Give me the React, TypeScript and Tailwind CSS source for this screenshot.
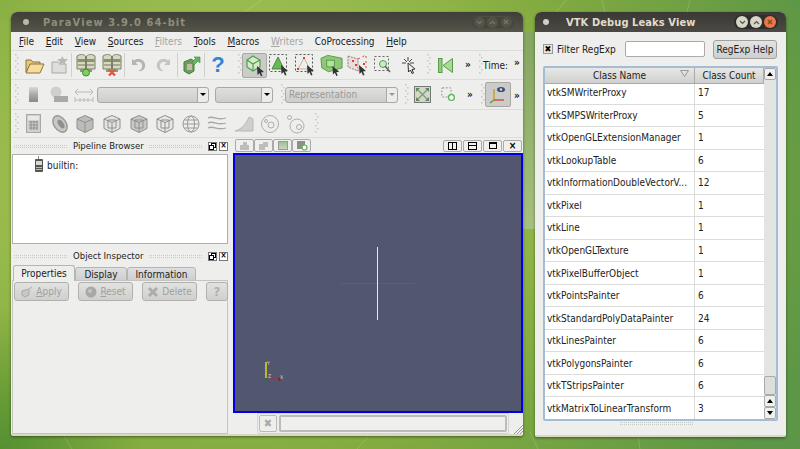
import React from "react";

const font = "font-['DejaVu_Sans_Condensed','DejaVu_Sans',sans-serif]";

const Grip = ({ h = 22 }: { h?: number }) => (
  <svg width="4" height={h} className="shrink-0">
    {Array.from({ length: Math.floor(h / 3) }).map((_, i) => (
      <rect key={i} x={i % 2 ? 2 : 0} y={i * 3} width="1.5" height="1.5" fill="#c8c8c4" />
    ))}
  </svg>
);

const Sep = () => <div className="w-px h-[24px] bg-[#cfcfcb] shrink-0" />;

const Gap = ({ w }: { w: number }) => <div className="shrink-0" style={{ width: w }} />;

const Slot = ({ w = 26, children }: { w?: number; children?: React.ReactNode }) => (
  <div className="flex items-center justify-center shrink-0" style={{ width: w }}>
    {children}
  </div>
);

const More = () => <span className="text-[10px] font-bold text-[#222] leading-none">»</span>;

const Cube = ({ stroke = "#8f8f8b", fill = "#c9c9c5", inner = false }: { stroke?: string; fill?: string; inner?: boolean }) => (
  <svg width="20" height="20" viewBox="0 0 20 20">
    <path d="M10 1.5 L18 5 V14.5 L10 18.5 L2 14.5 V5 Z" fill={fill} stroke={stroke} />
    <path d="M2 5 L10 8.5 L18 5 M10 8.5 V18.5" fill="none" stroke={stroke} />
    {inner && <path d="M6 6 L14 6 L14 14 L6 14 Z" fill="none" stroke={stroke} />}
  </svg>
);

const Cursor = () => <path d="M13 12 L20 18 L17 18.5 L18.5 22 L17 22.5 L15.5 19 L13.5 21 Z" fill="#333" />;

const Server = ({ badge }: { badge: "green" | "red" }) => (
  <svg width="20" height="24" viewBox="0 0 20 24">
    <path d="M1 3 C4 1 7 1 9.5 3 V16 H1 Z" fill="#d9d6c4" stroke="#77806a" />
    <path d="M10.5 3 C13 1 16 1 19 3 V16 H10.5 Z" fill="#d9d6c4" stroke="#77806a" />
    <rect x="1.5" y="6" width="7.5" height="3" fill="#7f9a62" />
    <rect x="11" y="6" width="7.5" height="3" fill="#7f9a62" />
    <rect x="1.5" y="11" width="7.5" height="2" fill="#a8a890" />
    <rect x="11" y="11" width="7.5" height="2" fill="#a8a890" />
    <rect x="4" y="16" width="12" height="3" fill="#8c9a78" />
    {badge === "green" ? (
      <circle cx="10" cy="19.5" r="3.5" fill="#7bd35a" stroke="#3d8c2a" />
    ) : (
      <path d="M7 16.5 L13 22.5 M13 16.5 L7 22.5" stroke="#e0583a" strokeWidth="2.4" />
    )}
  </svg>
);

const Toolbar1 = () => (
  <div className="h-[29px] flex items-center border-b border-[#dcdcd8] pl-[4px]">
    <Grip />
    <Slot w={29}>
      <svg width="22" height="20" viewBox="0 0 22 20">
        <path d="M3 5 H8 L10 7 H17 V10 H7 L3 17 Z" fill="#e7c878" stroke="#8a7440" />
        <path d="M7 9 H21 L17 18 H3 Z" fill="#f5dc9a" stroke="#8a7440" />
      </svg>
    </Slot>
    <Slot w={23}>
      <svg width="20" height="20" viewBox="0 0 20 20">
        <path d="M2 7 H8 L10 9 H16 V18 H2 Z" fill="#dededa" stroke="#a8a8a4" />
        <path d="M12 1 L14 4 L18 4 L15 7 L16 10 L12 8 L9 10 L10 7 L7 4 L11 4 Z" fill="#b8b8b4" />
      </svg>
    </Slot>
    <Sep />
    <Gap w={1} />
    <Slot w={26}><Server badge="green" /></Slot>
    <Slot w={25}><Server badge="red" /></Slot>
    <Sep />
    <Slot w={26}>
      <svg width="20" height="20" viewBox="0 0 20 20">
        <path d="M4 4 V10 H10 L7.5 7.5 C11 5.5 15 8 14 12 C13.5 14 12 15.5 10 16 C15 17 18 13 17 9 C16 4.5 10 2.5 6 5.5 Z" fill="#b4b4b0" />
      </svg>
    </Slot>
    <Slot w={25}>
      <svg width="20" height="20" viewBox="0 0 20 20" className="-scale-x-100">
        <path d="M4 4 V10 H10 L7.5 7.5 C11 5.5 15 8 14 12 C13.5 14 12 15.5 10 16 C15 17 18 13 17 9 C16 4.5 10 2.5 6 5.5 Z" fill="#c4c4c0" />
      </svg>
    </Slot>
    <Gap w={1} />
    <Sep />
    <Slot w={25}>
      <svg width="20" height="20" viewBox="0 0 20 20">
        <path d="M3 7 L10 4 L13 6 V16 L8 19 L3 16 Z" fill="#6d9c5c" stroke="#4a7a3e" />
        <rect x="6" y="9" width="5" height="6" fill="#c8b8a8" />
        <path d="M11 7 L15 3 L13 2 H19 V8 L17 6 L13 10 Z" fill="#5fb860" stroke="#3d8c40" strokeWidth="0.6" />
      </svg>
    </Slot>
    <Gap w={1} />
    <Sep />
    <Slot w={26}>
      <span className="text-[22px] font-bold text-[#2f86d8] leading-none font-['Liberation_Sans',sans-serif]">?</span>
    </Slot>
    <Gap w={7} />
    <Grip />
    <div className="w-[25px] h-[25px] rounded-[2px] bg-[#cbcbc9] border border-[#a8a8a4] flex items-center justify-center shrink-0">
      <svg width="22" height="22" viewBox="0 0 22 22">
        <path d="M9 2 L16 6 V13 L9 17 L3 13 V6 Z" fill="#d8e8cc" stroke="#4aa04a" strokeWidth="1.2" />
        <path d="M3 6 L9 10 L16 6 M9 10 V17" fill="none" stroke="#4aa04a" strokeWidth="1.2" />
        <Cursor />
      </svg>
    </div>
    <Slot w={26}>
      <svg width="24" height="24" viewBox="0 0 24 24">
        <rect x="1.5" y="1.5" width="17" height="17" fill="none" stroke="#555" strokeDasharray="2 2" />
        <path d="M10 4 L16 16 H4 Z" fill="#68b85a" stroke="#4a8a40" />
        <Cursor />
      </svg>
    </Slot>
    <Slot w={26}>
      <svg width="24" height="24" viewBox="0 0 24 24">
        <rect x="1.5" y="1.5" width="17" height="17" fill="none" stroke="#555" strokeDasharray="2 2" />
        <path d="M10 5 L16 16 H4 Z" fill="none" stroke="#b8b8a8" />
        <rect x="9" y="4" width="2" height="2" fill="#e04030" />
        <rect x="3" y="15" width="2" height="2" fill="#e04030" />
        <rect x="15" y="15" width="2" height="2" fill="#e04030" />
        <Cursor />
      </svg>
    </Slot>
    <Slot w={25}>
      <svg width="25" height="24" viewBox="0 0 26 24">
        <path d="M2 5 L9 2 L24 5 V15 L10 19 L3 15 Z" fill="#8fc87a" stroke="#5a9a4a" />
        <rect x="8" y="7" width="8" height="7" fill="#b6e0a0" stroke="#5a9a4a" />
        <path d="M14 13 L21 19 L18 19.5 L19.5 23 L18 23.5 L16.5 20 L14.5 22 Z" fill="#333" />
      </svg>
    </Slot>
    <Slot w={27}>
      <svg width="24" height="24" viewBox="0 0 24 24">
        <path d="M2 3 L12 6 V18 L2 14 Z" fill="#eadcdc" stroke="#888" strokeDasharray="2 1" />
        <path d="M12 6 L20 2 V15 L12 18" fill="none" stroke="#e04030" strokeDasharray="2 3" />
        <rect x="6" y="7" width="2" height="2" fill="#e04030" />
        <rect x="9" y="11" width="2" height="2" fill="#e04030" />
        <rect x="17" y="10" width="2" height="2" fill="#e04030" />
        <Cursor />
      </svg>
    </Slot>
    <Slot w={23}>
      <svg width="20" height="20" viewBox="0 0 20 20">
        <rect x="1.5" y="1.5" width="14" height="14" fill="none" stroke="#666" strokeDasharray="2 2" />
        <circle cx="10" cy="9" r="3.5" fill="#cfe8c8" stroke="#5a9a5a" />
        <path d="M12 11 L17 17" stroke="#666" strokeWidth="1.6" />
      </svg>
    </Slot>
    <Slot w={30}>
      <svg width="20" height="20" viewBox="0 0 20 20">
        <path d="M9 2 V6 M5 4 L8 7 M13 4 L10 7 M3 8 H7 M11 8 H15" stroke="#444" />
        <path d="M9 8 L16 14 L13 14.5 L14.5 18 L13 18.5 L11.5 15 L9.5 17 Z" fill="#eee" stroke="#333" />
      </svg>
    </Slot>
    <Gap w={3} />
    <Grip />
    <Slot w={28}>
      <svg width="15" height="15" viewBox="0 0 15 15">
        <rect x="0.5" y="0.5" width="3.5" height="14" fill="#8fd07a" stroke="#5a9a4a" />
        <path d="M14.5 0.5 V14.5 L5 7.5 Z" fill="#a8dc90" stroke="#5a9a4a" />
      </svg>
    </Slot>
    <Slot w={18}><More /></Slot>
    <Gap w={2} />
    <Grip />
    <span className="text-[10px] text-[#222]">Time:</span>
    <div className="ml-[6px] -mt-[8px]"><More /></div>
  </div>
);

const Combo = ({ w, label, disabled }: { w: number; label?: string; disabled?: boolean }) => (
  <div
    className="h-[16px] rounded-[3px] border border-[#a9a9a6] bg-gradient-to-b from-[#dfdfdd] to-[#cdcdcb] flex items-center shrink-0"
    style={{ width: w }}
  >
    <span className="flex-1 pl-[3px] text-[10px] text-[#9a9a98] leading-none">{label}</span>
    <div className="w-[11px] h-full border-l border-[#a9a9a6] flex items-center justify-center bg-[#ececea] rounded-r-[3px]">
      <div className={`w-0 h-0 border-l-[3px] border-r-[3px] border-t-[3px] border-l-transparent border-r-transparent ${disabled ? "border-t-[#999]" : "border-t-black"}`} />
    </div>
  </div>
);

const Toolbar2 = () => (
  <div className="h-[30px] flex items-center border-b border-[#dcdcd8] pl-[4px]">
    <Grip />
    <Slot w={29}>
      <div className="w-[9px] h-[15px] bg-gradient-to-b from-[#dadada] via-[#aaa] to-[#8a8a8a]" />
    </Slot>
    <Slot w={22}>
      <svg width="20" height="20" viewBox="0 0 20 20">
        <circle cx="7" cy="7" r="5.5" fill="#cfcfcd" />
        <rect x="5" y="11" width="14" height="6" fill="#a9a9a7" />
      </svg>
    </Slot>
    <Slot w={27}>
      <svg width="20" height="18" viewBox="0 0 20 18">
        <path d="M1 6 H19 M4 3 L1 6 L4 9 M16 3 L19 6 L16 9" fill="none" stroke="#bbb" />
        <path d="M1 14 H19 M1 11 V16 M6 12 V16 M10 12 V16 M14 12 V16 M19 11 V16" fill="none" stroke="#bbb" />
      </svg>
    </Slot>
    <Combo w={112} />
    <Gap w={6} />
    <Combo w={58} />
    <Gap w={8} />
    <Grip />
    <Combo w={113} label="Representation" disabled />
    <Gap w={7} />
    <Grip />
    <Slot w={26}>
      <svg width="17" height="17" viewBox="0 0 17 17">
        <rect x="0.5" y="0.5" width="16" height="16" fill="#d5d5c8" stroke="#777" />
        <path d="M3 3 L14 14 M14 3 L3 14" stroke="#7aa27a" strokeWidth="1.4" />
        <path d="M2 2 H6 L2 6 Z M15 2 V6 L11 2 Z M2 15 V11 L6 15 Z M15 15 H11 L15 11 Z" fill="#5d8a5d" />
      </svg>
    </Slot>
    <Slot w={26}>
      <svg width="15" height="15" viewBox="0 0 18 18">
        <rect x="1" y="1" width="11" height="11" rx="1" fill="none" stroke="#777" strokeDasharray="2 2" />
        <circle cx="12.5" cy="12.5" r="3.5" fill="#fff" stroke="#58b858" strokeWidth="1.6" />
      </svg>
    </Slot>
    <Slot w={18}><More /></Slot>
    <Gap w={2} />
    <Grip />
    <div className="w-[26px] h-[25px] rounded-[2px] bg-[#cbcbc9] border border-[#a8a8a4] flex items-center justify-center shrink-0">
      <svg width="20" height="20" viewBox="0 0 20 20">
        <path d="M6 4 V15" fill="none" stroke="#c9a030" strokeWidth="1.5" />
        <path d="M6 15 L2 18" stroke="#5aa040" strokeWidth="1.5" />
        <path d="M6 15 H16" stroke="#d0503a" strokeWidth="1.5" />
        <ellipse cx="13" cy="4.5" rx="4" ry="2.6" fill="#3d4f7a" />
        <circle cx="13" cy="4.5" r="1.2" fill="#ddd" />
      </svg>
    </div>
    <div className="ml-[3px] -mt-[2px]"><More /></div>
  </div>
);

const Toolbar3 = () => {
  const c = "#a8a8a4";
  return (
    <div className="h-[28px] flex items-center border-b border-[#dcdcd8] pl-[4px]">
      <Grip />
      <Slot w={29}>
        <svg width="15" height="19" viewBox="0 0 15 19">
          <rect x="0.5" y="0.5" width="14" height="18" fill="#d0d0cc" stroke={c} />
          <rect x="2" y="2" width="11" height="4" fill="#e8e8e6" />
          <path d="M3 8 H12 M3 11 H12 M3 14 H12 M5 7 V16 M8 7 V16 M11 7 V16" stroke="#8f8f8b" />
        </svg>
      </Slot>
      <Slot w={23}>
        <svg width="20" height="20" viewBox="0 0 20 20">
          <ellipse cx="10" cy="10" rx="6" ry="9" transform="rotate(-35 10 10)" fill="#c8c8c4" stroke="#9a9a96" strokeWidth="1.5" />
          <ellipse cx="11" cy="10" rx="2.5" ry="5" transform="rotate(-35 11 10)" fill="#8f8f8b" />
        </svg>
      </Slot>
      <Slot w={27}><Cube fill="#bcbcb8" /></Slot>
      <Slot w={27}><Cube fill="#e4e4e2" inner /></Slot>
      <Slot w={27}><Cube fill="#c8c8c4" inner /></Slot>
      <Slot w={26}><Cube fill="#e8e8e6" inner /></Slot>
      <Slot w={26}>
        <svg width="20" height="20" viewBox="0 0 20 20" fill="none" stroke="#9a9a96">
          <circle cx="10" cy="10" r="8" />
          <ellipse cx="10" cy="10" rx="3.5" ry="8" />
          <path d="M2 10 H18 M3.5 6 H16.5 M3.5 14 H16.5" />
        </svg>
      </Slot>
      <Slot w={26}>
        <svg width="20" height="18" viewBox="0 0 20 18" fill="none" stroke="#a8a8a4" strokeWidth="1.3">
          <path d="M1 3 C6 0 10 6 19 3 M1 8 C6 5 10 11 19 8 M1 13 C6 10 10 16 19 13" />
        </svg>
      </Slot>
      <Slot w={27}>
        <svg width="20" height="18" viewBox="0 0 20 18">
          <path d="M1 16 C8 14 12 9 15 2 L19 4 V16 Z" fill="#cfcfcb" stroke="#b8b8b4" />
        </svg>
      </Slot>
      <Slot w={25}>
        <svg width="20" height="20" viewBox="0 0 20 20" fill="none" stroke="#adada9">
          <circle cx="10" cy="10" r="8.5" />
          <circle cx="11" cy="11" r="3" />
          <circle cx="6" cy="7" r="1.5" />
        </svg>
      </Slot>
      <Slot w={27}>
        <svg width="20" height="20" viewBox="0 0 20 20" fill="none" stroke="#adada9">
          <circle cx="3.5" cy="3.5" r="2" />
          <circle cx="11" cy="12" r="7" />
          <circle cx="13" cy="13" r="2.5" />
        </svg>
      </Slot>
      <Gap w={6} />
      <Grip />
    </div>
  );
};

const DockHeader = ({ title }: { title: string }) => (
  <div className="h-[12px] flex items-center gap-[6px] text-[9.5px] text-[#222] leading-none">
    <div className="flex-1 h-[3px] border-y border-dotted border-[#c8c8c4] ml-[2px]" />
    <span className="w-[70px] text-center shrink-0 whitespace-nowrap">{title}</span>
    <div className="flex-1 h-[3px] border-y border-dotted border-[#c8c8c4]" />
    <div className="flex gap-[2px] shrink-0">
      <div className="w-[9px] h-[9px] border border-[#777] bg-white relative">
        <div className="absolute left-[2px] top-0 w-[5px] h-[5px] border border-black" />
        <div className="absolute left-0 top-[2px] w-[5px] h-[5px] border border-black bg-white" />
      </div>
      <div className="w-[9px] h-[9px] border border-[#777] bg-white flex items-center justify-center text-[8px] font-bold text-black">×</div>
    </div>
  </div>
);

const InspectorBtn = ({ w, label, first, icon }: { w: number; label?: string; first?: string; icon: React.ReactNode }) => (
  <div
    className="h-[19px] rounded-[3px] border border-[#b0b0ae] bg-gradient-to-b from-[#e2e2e0] to-[#cfcfcd] flex items-center justify-center gap-[3px] text-[10px] text-[#a0a09e] shrink-0"
    style={{ width: w }}
  >
    {icon}
    {label && (
      <span>
        <span className="underline">{first}</span>
        {label}
      </span>
    )}
  </div>
);

const Tab = ({ label, w, active }: { label: string; w: number; active?: boolean }) => (
  <div
    style={{ width: w }}
    className={
      active
        ? "h-[16px] text-[10px] text-[#222] flex items-center justify-center bg-[#eeeeec] border border-b-0 border-[#b5b5b2] rounded-t-[3px] relative z-10"
        : "h-[14px] mt-[2px] text-[10px] text-[#222] flex items-center justify-center bg-gradient-to-b from-[#dedfe0] to-[#cfcfd2] border border-[#b5b5b2] rounded-t-[3px]"
    }
  >
    {label}
  </div>
);

const ViewTab = ({ children }: { children: React.ReactNode }) => (
  <div className="w-[19px] h-[13px] rounded-[2px] border border-[#aaa] bg-[#efefed] flex items-center justify-center">{children}</div>
);

const Chevron = ({ up, color }: { up?: boolean; color: string }) => (
  <svg width="7" height="5" viewBox="0 0 7 5">
    <path d={up ? "M1 4 L3.5 1.5 L6 4" : "M1 1 L3.5 3.5 L6 1"} fill="none" stroke={color} strokeWidth="1.2" />
  </svg>
);

const Cross = ({ color }: { color: string }) => (
  <svg width="6" height="6" viewBox="0 0 6 6">
    <path d="M1 1 L5 5 M5 1 L1 5" fill="none" stroke={color} strokeWidth="1.2" />
  </svg>
);

const LeftWindow = () => (
  <div className={`absolute left-[11px] top-[12px] w-[512px] h-[424px] rounded-t-[6px] rounded-b-[2px] overflow-hidden flex flex-col bg-[#eeeeec] shadow-[0_1px_3px_rgba(0,0,0,0.45)] border-b-2 border-[#d8d8c4] ${font}`}>
    <div className="h-[20px] shrink-0 bg-gradient-to-b from-[#3f3e38] to-[#55554a] flex items-center">
      <div className="w-[6px] h-[6px] rounded-full bg-[#b8b8a8] ml-[12px]" />
      <span className="ml-[14px] font-bold text-[11px] text-[#8f8e7a] tracking-[1.1px] leading-none whitespace-nowrap">ParaView 3.9.0 64-bit</span>
      <div className="ml-auto mr-[8px] w-[44px] h-[13px] rounded-full bg-[#45453c] flex items-center justify-around px-[1px] border border-[#4e4e44]">
        <div className="w-[11px] h-[11px] rounded-full bg-[#53534a] flex items-center justify-center"><Chevron color="#77776a" /></div>
        <div className="w-[11px] h-[11px] rounded-full bg-[#53534a] flex items-center justify-center"><Chevron up color="#77776a" /></div>
        <div className="w-[11px] h-[11px] rounded-full bg-[#53534a] flex items-center justify-center"><Cross color="#77776a" /></div>
      </div>
    </div>
    <div className="h-[19px] shrink-0 flex items-center pl-[8px] gap-[11.7px] text-[10px] text-[#222] border-b border-[#dcdcd8]">
      <span><u>F</u>ile</span>
      <span><u>E</u>dit</span>
      <span><u>V</u>iew</span>
      <span><u>S</u>ources</span>
      <span className="text-[#a5a5a3]"><u>F</u>ilters</span>
      <span><u>T</u>ools</span>
      <span><u>M</u>acros</span>
      <span className="text-[#a5a5a3]"><u>W</u>riters</span>
      <span>CoProcessing</span>
      <span><u>H</u>elp</span>
    </div>
    <Toolbar1 />
    <Toolbar2 />
    <Toolbar3 />
    <div className="flex-1 flex min-h-0">
      <div className="w-[218px] shrink-0 flex flex-col pl-[1px] pr-[1px]">
        <div className="mt-[2px]"><DockHeader title="Pipeline Browser" /></div>
        <div className="h-[90px] mt-[2px] bg-white border border-[#b0b0ae] flex items-start pt-[1px]">
          <svg width="8" height="16" viewBox="0 0 8 16" className="ml-[22px]">
            <rect x="3" y="0" width="1" height="3" fill="#888" />
            <rect x="0" y="3" width="8" height="13" rx="1" fill="#55554f" />
            <rect x="1" y="5" width="6" height="4" fill="#d8d8d4" />
            <rect x="1" y="11" width="6" height="1" fill="#bbb" />
            <rect x="1" y="13" width="6" height="1" fill="#bbb" />
          </svg>
          <span className="ml-[4px] mt-[3px] text-[10px] text-[#222] leading-[14px]">builtin:</span>
        </div>
        <div className="mt-[6px]"><DockHeader title="Object Inspector" /></div>
        <div className="flex mt-[3px] pl-[1px] h-[16px]">
          <Tab label="Properties" w={62} active />
          <Tab label="Display" w={52} />
          <Tab label="Information" w={69} />
        </div>
        <div className="flex-1 border border-[#c4c4c0] -mt-[1px] flex gap-[9px] pl-[1px] pt-[1px] items-start">
          <InspectorBtn
            w={55}
            first="A"
            label="pply"
            icon={
              <svg width="12" height="12" viewBox="0 0 12 12">
                <path d="M1 5 L8 3 V9 L4 11 L1 9 Z" fill="#c8c8c4" stroke="#aaa" />
                <path d="M7 4 L11 1" stroke="#bbb" strokeWidth="1.5" />
              </svg>
            }
          />
          <InspectorBtn
            w={55}
            first="R"
            label="eset"
            icon={
              <svg width="12" height="12" viewBox="0 0 12 12">
                <circle cx="6" cy="6" r="5.5" fill="#a8a8a6" />
                <circle cx="5" cy="5" r="2" fill="#c4c4c2" />
              </svg>
            }
          />
          <InspectorBtn
            w={55}
            label="Delete"
            icon={
              <svg width="12" height="12" viewBox="0 0 12 12">
                <path d="M2 2 L10 10 M10 2 L2 10" stroke="#acacaa" strokeWidth="3" />
              </svg>
            }
          />
          <InspectorBtn w={22} icon={<span className="text-[13px] font-bold text-[#b0b0ae] leading-none">?</span>} />
        </div>
      </div>
      <div className="flex-1 flex flex-col pl-[4px] min-w-0">
        <div className="h-[16px] flex items-center pl-[2px]">
          <div className="flex">
            <ViewTab>
              <svg width="11" height="10" viewBox="0 0 11 10"><path d="M1 9 V4 H4 V1 H8 V4 H10 V9 Z" fill="#bdbdbb" /></svg>
            </ViewTab>
            <ViewTab>
              <svg width="11" height="10" viewBox="0 0 11 10"><path d="M1 9 V3 H5 V1 H10 V6 H7 V9 Z" fill="#bdbdbb" /></svg>
            </ViewTab>
            <ViewTab><div className="w-[10px] h-[9px] bg-gradient-to-b from-[#9fbf98] to-[#c8d8c0] border border-[#999]" /></ViewTab>
            <ViewTab>
              <svg width="12" height="11" viewBox="0 0 12 11">
                <rect x="1" y="1" width="8" height="8" fill="#8f8f86" />
                <circle cx="8.5" cy="7.5" r="2.5" fill="#fff" stroke="#58b858" strokeWidth="1.2" />
              </svg>
            </ViewTab>
          </div>
          <div className="ml-auto flex gap-px pr-[1px]">
            <div className="w-[19px] h-[12px] rounded-[2px] border border-[#a9a9a6] bg-[#f0f0ee] flex items-center justify-center">
              <div className="w-[9px] h-[8px] border border-black flex justify-center"><div className="w-px h-full bg-black" /></div>
            </div>
            <div className="w-[19px] h-[12px] rounded-[2px] border border-[#a9a9a6] bg-[#f0f0ee] flex items-center justify-center">
              <div className="w-[9px] h-[8px] border border-black flex items-center"><div className="h-px w-full bg-black" /></div>
            </div>
            <div className="w-[19px] h-[12px] rounded-[2px] border border-[#a9a9a6] bg-[#f0f0ee] flex items-center justify-center">
              <div className="w-[8px] h-[7px] border border-black border-t-2" />
            </div>
            <div className="w-[19px] h-[12px] rounded-[2px] border border-[#a9a9a6] bg-[#f0f0ee] flex items-center justify-center text-[10px] font-bold text-black leading-none">×</div>
          </div>
        </div>
        <div className="h-[260px] border-2 border-[#0000e6] bg-[#52566e] relative shrink-0">
          <div className="absolute left-[105px] top-[128px] w-[74px] h-px bg-[#8a4c5c]" />
          <div className="absolute left-[142px] top-[92px] w-px h-[73px] bg-[#e8e8e8]" />
          <svg width="30" height="30" viewBox="0 0 30 30" className="absolute left-[23px] top-[202px]">
            <path d="M8 5 V22" stroke="#d8d020" strokeWidth="1.6" />
            <path d="M8 22 H22" stroke="#b03030" />
            <rect x="7" y="21" width="2.5" height="2.5" fill="#1e7a30" />
            <rect x="20" y="21" width="2.5" height="2.5" fill="#8a2028" />
            <text x="9" y="8" fontSize="5" fill="#ddd">Y</text>
            <text x="10" y="21" fontSize="5" fill="#ddd">Z</text>
            <text x="22" y="22" fontSize="5" fill="#ddd">X</text>
          </svg>
        </div>
        <div className="flex-1 flex items-center pl-[24px] relative">
          <div className="flex items-center gap-[2px] border border-[#d4d4d2] rounded-[2px] p-px">
            <div className="w-[18px] h-[17px] border border-[#bbb] rounded-[2px] flex items-center justify-center">
              <span className="text-[11px] font-bold text-[#aaa] leading-none">✖</span>
            </div>
            <div className="w-[228px] h-[17px] border-2 border-[#bcbcba] rounded-[2px] bg-[#efefed]" />
          </div>
          <svg width="9" height="9" viewBox="0 0 9 9" className="absolute right-0 bottom-0">
            <path d="M0 9 L9 0 M3 9 L9 3 M6 9 L9 6" stroke="#999" />
          </svg>
        </div>
      </div>
    </div>
  </div>
);

const rows: [string, string][] = [
  ["vtkSMWriterProxy", "17"],
  ["vtkSMPSWriterProxy", "5"],
  ["vtkOpenGLExtensionManager", "1"],
  ["vtkLookupTable", "6"],
  ["vtkInformationDoubleVectorV...", "12"],
  ["vtkPixel", "1"],
  ["vtkLine", "1"],
  ["vtkOpenGLTexture", "1"],
  ["vtkPixelBufferObject", "1"],
  ["vtkPointsPainter", "6"],
  ["vtkStandardPolyDataPainter", "24"],
  ["vtkLinesPainter", "6"],
  ["vtkPolygonsPainter", "6"],
  ["vtkTStripsPainter", "6"],
  ["vtkMatrixToLinearTransform", "3"],
];

const ScrollArrow = ({ up }: { up?: boolean }) => (
  <div className="h-[12px] shrink-0 border border-[#a9a9a6] rounded-[2px] bg-[#f0f0ee] flex items-center justify-center">
    <div className={up
      ? "w-0 h-0 border-l-[3px] border-r-[3px] border-b-[4px] border-l-transparent border-r-transparent border-b-black"
      : "w-0 h-0 border-l-[3px] border-r-[3px] border-t-[4px] border-l-transparent border-r-transparent border-t-black"} />
  </div>
);

const RightWindow = () => (
  <div className={`absolute left-[535px] top-[12px] w-[251px] h-[425px] rounded-t-[6px] rounded-b-[2px] overflow-hidden flex flex-col bg-[#eeeeec] shadow-[0_1px_3px_rgba(0,0,0,0.45)] border-b-2 border-[#d8d8c4] ${font}`}>
    <div className="h-[20px] shrink-0 bg-gradient-to-b from-[#3a3935] to-[#4a4944] flex items-center">
      <div className="w-[6px] h-[6px] rounded-full bg-[#d0d0c4] ml-[8px]" />
      <span className="ml-[17px] font-bold text-[11px] text-[#e0dccc] tracking-[0.1px] leading-none whitespace-nowrap">VTK Debug Leaks View</span>
      <div className="ml-auto mr-[8px] w-[44px] h-[14px] rounded-full bg-[#2f2e2b] flex items-center justify-around px-[1px]">
        <div className="w-[12px] h-[12px] rounded-full bg-[#d8d6c8] flex items-center justify-center"><Chevron color="#555" /></div>
        <div className="w-[12px] h-[12px] rounded-full bg-[#d8d6c8] flex items-center justify-center"><Chevron up color="#555" /></div>
        <div className="w-[12px] h-[12px] rounded-full bg-[#e8784a] flex items-center justify-center"><Cross color="#8a4020" /></div>
      </div>
    </div>
    <div className="h-[34px] shrink-0 flex items-center pl-[8px] text-[10px] text-[#222] whitespace-nowrap">
      <div className="w-[10px] h-[10px] border border-[#999] bg-[#e8e8e6] flex items-center justify-center text-[9px] font-bold text-black leading-none">✖</div>
      <span className="ml-[4px] w-[68px]">Filter RegExp</span>
      <div className="w-[80px] h-[16px] bg-white border border-[#aaa] rounded-[2px]" />
      <div className="ml-[8px] w-[64px] h-[19px] bg-gradient-to-b from-[#e4e4e2] to-[#cececc] border border-[#a0a09e] rounded-[3px] flex items-center justify-center">RegExp Help</div>
    </div>
    <div className="mx-[8px] h-[355px] shrink-0 border-2 border-[#a4bcd4] rounded-[2px] flex flex-col bg-white text-[10px] text-[#222]">
      <div className="flex h-[16px] shrink-0 relative z-10">
        <div className="w-[150px] shrink-0 bg-gradient-to-b from-[#e8e8e6] to-[#cfcfcd] border-r border-b border-[#a9a9a6] relative flex items-center justify-center">
          Class Name
          <svg width="9" height="7" viewBox="0 0 9 7" className="absolute right-[5px] top-[2px]">
            <path d="M0.5 0.5 H8.5 L4.5 6.5 Z" fill="none" stroke="#999" />
          </svg>
        </div>
        <div className="w-[69px] shrink-0 bg-gradient-to-b from-[#e8e8e6] to-[#cfcfcd] border-r border-b border-[#a9a9a6] flex items-center justify-center">Class Count</div>
        <div className="flex-1 min-w-0 bg-[#e4e4e2]"><ScrollArrow up /></div>
      </div>
      <div className="flex-1 flex min-h-0 -mt-[2px]">
        <div className="w-[219px] shrink-0 flex flex-col">
          {rows.map(([n, c]) => (
            <div key={n} className="flex-1 flex items-center border-b border-[#dcdcda] last:border-b-0">
              <div className="w-[150px] shrink-0 pl-[2px] self-stretch flex items-center border-r border-[#dcdcda] whitespace-nowrap overflow-hidden">{n}</div>
              <div className="pl-[3px]">{c}</div>
            </div>
          ))}
        </div>
        <div className="flex-1 flex flex-col bg-[#e4e4e2] min-w-0">
          <div className="flex-1" />
          <div className="h-[19px] shrink-0 border border-[#a9a9a6] bg-[#dddddb] rounded-[2px]" />
          <ScrollArrow up />
          <ScrollArrow />
        </div>
      </div>
    </div>
    <div className="ml-[85px] mr-[93px] mt-[1px] h-[3px] border-y border-dotted border-[#c8c8c4] shrink-0" />
  </div>
);

const Streaks = () => (
  <svg width="800" height="449" viewBox="0 0 800 449" className="absolute inset-0" fill="none" stroke="#ffffff" strokeOpacity="0.16">
    <path d="M64 436 L72 449" />
    <path d="M357 449 L369 436" />
    <path d="M530 432 L538 449" />
    <path d="M638 436 L640 449" />
    <path d="M245 12 L262 0" />
    <path d="M556 12 L566 0" />
    <path d="M602 0 L605 12" />
    <path d="M690 0 L687 12" />
  </svg>
);

export default function App() {
  return (
    <div className="relative w-[800px] h-[449px] overflow-hidden bg-[radial-gradient(circle_140px_at_0_449px,rgba(60,130,40,0.6),transparent),radial-gradient(ellipse_620px_460px_at_240px_180px,#aac865_0%,#98ba4c_40%,#84ac40_60%,#5c9646_100%)]">
      <Streaks />
      <div className="absolute left-[523px] top-[32px] w-[12px] h-[197px] bg-gradient-to-b from-[#84a660] to-[#a6c07e]" />
      <LeftWindow />
      <RightWindow />
    </div>
  );
}
